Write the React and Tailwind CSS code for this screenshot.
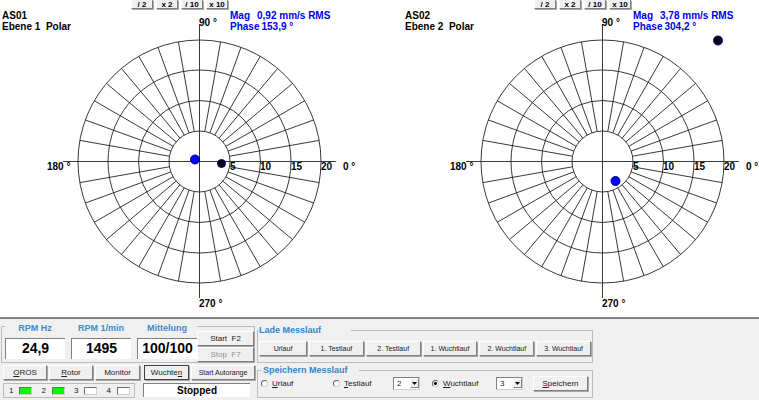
import React from "react";

const CX = 199.5;
const CY = 161.5;
const RADII = [30.5, 61, 91.5, 121.5];
const SPOKES = Array.from({ length: 36 }, (_, i) => i * 10).filter((a) => a % 90 !== 0);

const BEVEL =
  "border border-t-white border-l-white border-r-[#808080] border-b-[#808080] shadow-[1px_1px_0_#a8a8a8] bg-[#f0f0f0]";
const SUNKEN = "border-t border-l border-t-[#808080] border-l-[#808080] bg-white";

function PolarChart({ title, dots }) {
  return (
    <svg
      viewBox="0 0 356 317"
      className="col-start-1 row-start-1 block h-auto w-full overflow-visible"
      role="img"
      aria-label={title}
    >
      <g fill="none" stroke="#222222" strokeWidth="0.9">
        {RADII.map((r) => (
          <circle key={r} cx={CX} cy={CY} r={r} />
        ))}
        {SPOKES.map((a) => {
          const c = Math.cos((a * Math.PI) / 180);
          const s = Math.sin((a * Math.PI) / 180);
          return (
            <line
              key={a}
              x1={CX + 30.5 * c}
              y1={CY + 30.5 * s}
              x2={CX + 121.5 * c}
              y2={CY + 121.5 * s}
            />
          );
        })}
        <line x1="63" y1={CY} x2="336" y2={CY} />
        <line x1={CX} y1="24" x2={CX} y2="298" />
      </g>
      <g className="text-[10px] font-bold" fill="#000000">
        <text x="199" y="26">90 °</text>
        <text x="47" y="170">180 °</text>
        <text x="199" y="307">270 °</text>
        <text x="230" y="170">5</text>
        <text x="260" y="170">10</text>
        <text x="291" y="170">15</text>
        <text x="321" y="170">20</text>
        <text x="343" y="170">0 °</text>
      </g>
      {dots.map((d) => (
        <circle
          key={d.fill}
          cx={d.x}
          cy={d.y}
          r={d.r}
          fill={d.fill}
          stroke={d.stroke}
          strokeWidth="1"
        />
      ))}
    </svg>
  );
}

function Plot({ name, plane, mag, phase, dots }) {
  return (
    <section className="grid">
      <PolarChart title={`${name} ${plane}`} dots={dots} />
      <div className="z-10 col-start-1 row-start-1 flex items-start self-start">
        <h2 className="w-[131px] pt-[10px] pl-[2px] text-[10px] leading-[11px] font-bold whitespace-pre">
          {name}
          <br />
          {plane}
        </h2>
        <div className="flex gap-[3px]">
          {["/ 2", "x 2", "/ 10", "x 10"].map((t) => (
            <button
              key={t}
              type="button"
              className={`${BEVEL} h-[9px] w-[22px] border-t-0 text-center text-[8px] leading-[9px] font-bold whitespace-nowrap`}
            >
              {t}
            </button>
          ))}
        </div>
        <dl className="grid grid-cols-[27px_auto] pt-[10px] pl-[2px] text-[10px] leading-[11px] font-bold whitespace-nowrap text-[#0000f0]">
          <dt>Mag</dt>
          <dd>{mag}</dd>
          <div className="col-span-2 flex gap-[2px]">
            <dt>Phase</dt>
            <dd>{phase}</dd>
          </div>
        </dl>
      </div>
    </section>
  );
}

function Readout({ id, label, value }) {
  return (
    <div className="flex w-[60px] flex-col gap-1">
      <label htmlFor={id} className="text-center text-[9px] leading-3 font-bold text-[#3c8ccb]">
        {label}
      </label>
      <output
        id={id}
        className={`${SUNKEN} h-[21px] text-center text-[14px] leading-[19px] font-bold`}
      >
        {value}
      </output>
    </div>
  );
}

function Led({ n, on }) {
  return (
    <div className="flex items-center gap-[6px] text-[8px] leading-[9px]">
      <span>{n}</span>
      <span
        className={`h-[8px] w-[13px] border border-t-[#707070] border-l-[#707070] border-r-[#d0d0d0] border-b-[#d0d0d0] ${on ? "bg-[#00ff00]" : "bg-white"}`}
      />
    </div>
  );
}

function Radio({ first, rest, checked, className }) {
  return (
    <label className={`flex items-center gap-[4px] text-[8px] leading-[10px] ${className}`}>
      <input
        type="radio"
        name="save-run"
        defaultChecked={checked}
        className="h-[7px] w-[7px] shrink-0 appearance-none rounded-full border border-t-[#606060] border-l-[#606060] border-r-[#d0d0d0] border-b-[#d0d0d0] bg-white checked:bg-[radial-gradient(circle,#000_1px,#fff_2px)]"
      />
      <span>
        <u>{first}</u>
        {rest}
      </span>
    </label>
  );
}

function Picker({ label, value }) {
  return (
    <div className={`${SUNKEN} flex h-[13px] w-[27px] border-r border-b border-r-[#d0d0d0] border-b-[#d0d0d0]`}>
      <div className="grid w-full">
        <select
          aria-label={label}
          defaultValue={value}
          className="col-start-1 row-start-1 w-full appearance-none pl-[3px] text-[8px] leading-[10px]"
        >
          <option>1</option>
          <option>2</option>
          <option>3</option>
        </select>
        <span
          className={`${BEVEL} pointer-events-none col-start-1 row-start-1 flex h-[10px] w-[9px] items-center justify-center justify-self-end shadow-none`}
        >
          <svg viewBox="0 0 5 3" className="h-[3px] w-[5px]">
            <path d="M0 0h5L2.5 3z" fill="#000" />
          </svg>
        </span>
      </div>
    </div>
  );
}

function ToolButton({ className, children, ...rest }) {
  return (
    <button
      type="button"
      className={`${BEVEL} h-[15px] text-center whitespace-nowrap ${className}`}
      {...rest}
    >
      {children}
    </button>
  );
}

export default function App() {
  return (
    <div className="min-h-screen overflow-hidden bg-white font-['Liberation_Sans',Arial,sans-serif] text-black">
      <main className="grid grid-cols-2 gap-x-[47px]">
        <Plot
          name="AS01"
          plane="Ebene 1  Polar"
          mag="0,92 mm/s RMS"
          phase="153,9 °"
          dots={[
            { x: 195, y: 159.5, r: 4.5, fill: "#0000ff", stroke: "#000080" },
            { x: 221.5, y: 163.5, r: 4, fill: "#000000", stroke: "#0000a0" },
          ]}
        />
        <Plot
          name="AS02"
          plane="Ebene 2  Polar"
          mag="3,78 mm/s RMS"
          phase="304,2 °"
          dots={[
            { x: 212.5, y: 181, r: 4.5, fill: "#0000ff", stroke: "#000080" },
            { x: 315, y: 40.5, r: 4.5, fill: "#000000", stroke: "#0000a0" },
          ]}
        />
      </main>

      <footer className="flex min-h-[83px] gap-[2px] border-t-2 border-[#858585] bg-[#f0f0f0] text-[#202020]">
        <div className="flex w-[255px] shrink-0 flex-col pt-[7px]">
          <div className="ml-px flex h-[37px] border border-[#bcbcbc] pl-[3px]">
            <div className="-mt-[5px] flex h-[37px] gap-[6px] bg-[#f0f0f0] text-black">
              <Readout id="rpm-hz" label="RPM Hz" value="24,9" />
              <Readout id="rpm-min" label="RPM 1/min" value="1495" />
              <Readout id="avg" label="Mittelung" value="100/100" />
            </div>
            <div className="flex flex-1 flex-col gap-px pt-[4px] text-[8px] leading-[12px]">
              <ToolButton>Start&nbsp; F2</ToolButton>
              <ToolButton className="text-[#909090]" disabled>
                Stop&nbsp; F7
              </ToolButton>
            </div>
          </div>
          <div className="mt-[2px] flex gap-[2px] pl-[3px] text-[8px] leading-[12px]">
            <ToolButton className="w-[44px]">
              <u>O</u>ROS
            </ToolButton>
            <ToolButton className="w-[44px]">
              <u>R</u>otor
            </ToolButton>
            <ToolButton className="w-[45px]">Monitor</ToolButton>
            <div className="ml-[2px] flex flex-1 gap-[2px]">
              <ToolButton className="w-[45px] outline outline-1 -outline-offset-1 outline-[#404040]">
                Wuchte<u>n</u>
              </ToolButton>
              <ToolButton className="flex-1 text-[7px]">Start Autorange</ToolButton>
            </div>
          </div>
          <div className="mt-[3px] flex gap-[8px] pl-[3px]">
            <div className="flex h-[15px] w-[132px] items-center justify-between border border-[#bcbcbc] pr-[4px] pl-[5px]">
              <Led n="1" on />
              <Led n="2" on />
              <Led n="3" />
              <Led n="4" />
            </div>
            <output
              aria-label="Status"
              className={`${SUNKEN} h-[14px] w-[107px] text-center text-[10px] leading-[13px] font-bold text-black`}
            >
              Stopped
            </output>
          </div>
        </div>

        <div className="flex w-[336px] flex-col gap-px pt-[5px]">
          <fieldset className="h-[39px] border border-[#bcbcbc] px-px">
            <legend className="w-[92px] text-[9px] leading-3 font-bold text-[#2f86cc]">
              Lade Messlauf
            </legend>
            <div className="flex gap-[2px] pt-[5px] text-[7px] leading-[12px]">
              <ToolButton className="w-[48px]">Urlauf</ToolButton>
              <ToolButton className="flex-1">1. Testlauf</ToolButton>
              <ToolButton className="flex-1">2. Testlauf</ToolButton>
              <ToolButton className="flex-1">1. Wuchtlauf</ToolButton>
              <ToolButton className="flex-1">2. Wuchtlauf</ToolButton>
              <ToolButton className="flex-1">3. Wuchtlauf</ToolButton>
            </div>
          </fieldset>
          <fieldset className="h-[34px] border border-[#bcbcbc] px-[3px]">
            <legend className="w-[98px] pl-[2px] text-[9px] leading-3 font-bold text-[#2f86cc]">
              Speichern Messlauf
            </legend>
            <div className="flex items-center text-[8px] leading-[12px]">
              <Radio first="U" rest="rlauf" className="w-[72px]" />
              <Radio first="T" rest="estlauf" className="w-[60px]" />
              <Picker label="Testlauf" value="2" />
              <Radio first="W" rest="uchtlauf" checked className="w-[76px] pl-[12px]" />
              <div className="flex flex-1 justify-between pr-px">
                <div className="flex items-center">
                  <Picker label="Wuchtlauf" value="3" />
                </div>
                <ToolButton className="w-[55px]">
                  <u>S</u>peichern
                </ToolButton>
              </div>
            </div>
          </fieldset>
        </div>
      </footer>
    </div>
  );
}
